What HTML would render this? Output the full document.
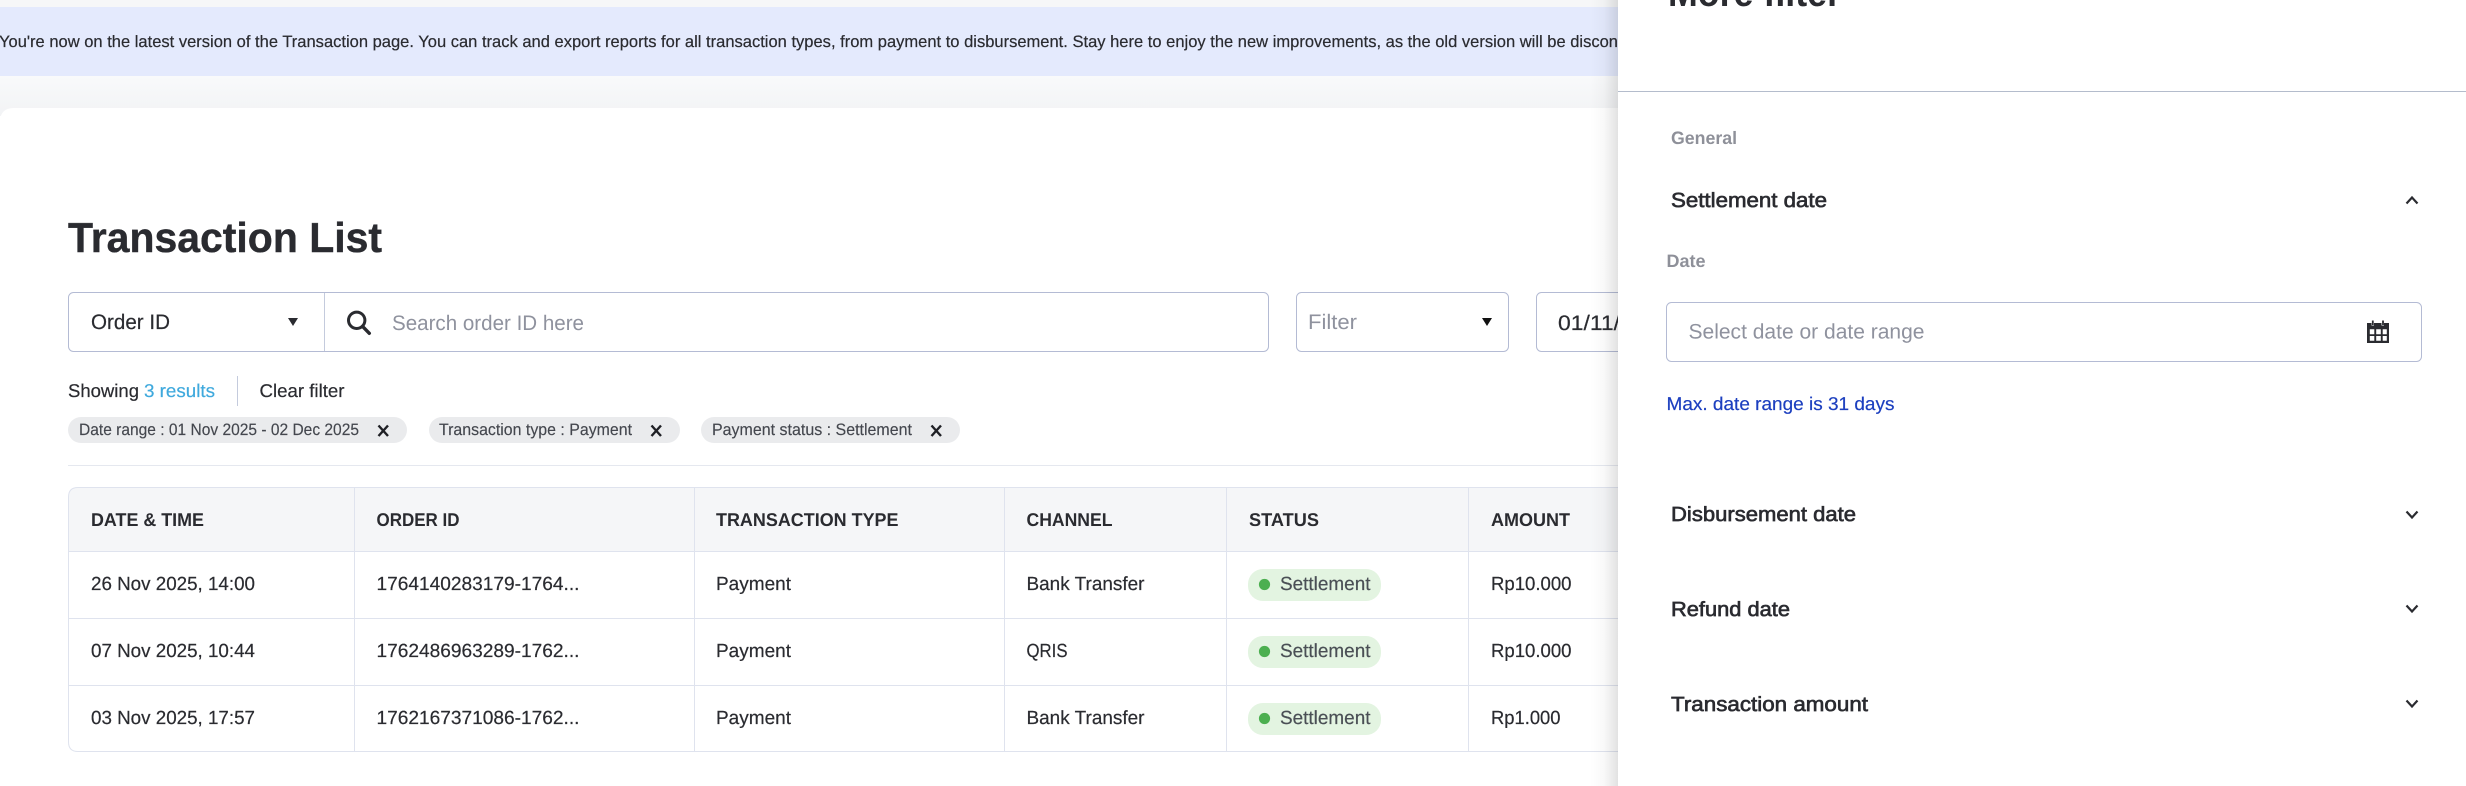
<!DOCTYPE html>
<html lang="en">
<head>
<meta charset="utf-8">
<title>Transaction List</title>
<style>
html,body{margin:0;padding:0;width:2466px;height:786px;overflow:hidden;background:#fff}
svg{display:block}
text{font-family:"Liberation Sans",sans-serif;white-space:pre;text-rendering:geometricPrecision}
.b{font-weight:700}
.m{stroke-width:.65px}
.t{stroke:#2a2b30;stroke-width:.2px}
</style>
</head>
<body>
<svg xmlns="http://www.w3.org/2000/svg" width="2466" height="786" viewBox="0 0 2466 786">
<defs>
<linearGradient id="top" x1="0" y1="0" x2="0" y2="1"><stop offset="0" stop-color="#f9fafb"/><stop offset="1" stop-color="#f2f3f5"/></linearGradient>
<linearGradient id="sh" x1="0" y1="0" x2="1" y2="0"><stop offset="0" stop-color="#000" stop-opacity="0"/><stop offset=".5" stop-color="#000" stop-opacity=".025"/><stop offset="1" stop-color="#000" stop-opacity=".115"/></linearGradient>
</defs>

<!-- page background -->
<rect width="2466" height="786" fill="#fff"/>
<rect width="2466" height="7" fill="#f6f7f8"/>
<rect y="76" width="2466" height="40" fill="url(#top)"/>
<rect y="7" width="2466" height="69" fill="#e4eafd"/>
<text class="t" x="-1" y="47" font-size="16.5" fill="#2a2b30" textLength="1619" lengthAdjust="spacingAndGlyphs">You're now on the latest version of the Transaction page. You can track and export reports for all transaction types, from payment to disbursement. Stay here to enjoy the new improvements, as the old version will be discon</text>

<!-- card -->
<path d="M0 122Q0 108 14 108H2466V786H0Z" fill="#fff"/>

<text class="b" x="68" y="252" font-size="42" fill="#2a2b30" stroke="#2a2b30" stroke-width=".4" textLength="314" lengthAdjust="spacingAndGlyphs">Transaction List</text>

<!-- search -->
<rect x="68.5" y="292.5" width="1200" height="59" rx="5" fill="#fff" stroke="#b4bbd4"/>
<line x1="324.5" y1="293" x2="324.5" y2="351" stroke="#c4cbdd"/>
<text class="t" x="91" y="329" font-size="21" fill="#2a2b30" textLength="79" lengthAdjust="spacingAndGlyphs">Order ID</text>
<path d="M288 318H298L293 326Z" fill="#2a2b30"/>
<circle cx="356.7" cy="320.3" r="8.2" fill="none" stroke="#2a2b30" stroke-width="3"/>
<path d="M362.6 326.4L369.3 333.3" fill="none" stroke="#2a2b30" stroke-width="3.4" stroke-linecap="round"/>
<text x="392" y="330" font-size="21" fill="#8f929e" textLength="192" lengthAdjust="spacingAndGlyphs">Search order ID here</text>

<rect x="1296.5" y="292.5" width="212" height="59" rx="5" fill="#fff" stroke="#b4bbd4"/>
<text x="1308" y="329" font-size="21" fill="#8f929e" textLength="49" lengthAdjust="spacingAndGlyphs">Filter</text>
<path d="M1482 318H1492L1487 326Z" fill="#111"/>

<rect x="1536.5" y="292.5" width="200" height="59" rx="5" fill="#fff" stroke="#b4bbd4"/>
<text class="t" x="1558" y="330" font-size="21" fill="#2a2b30" textLength="62" lengthAdjust="spacingAndGlyphs">01/11/</text>

<!-- results -->
<text class="t" x="68" y="397" font-size="18.5" fill="#2a2b30" textLength="71" lengthAdjust="spacingAndGlyphs">Showing</text>
<text x="144" y="397" font-size="18.5" fill="#3fa9dd" stroke="#3fa9dd" stroke-width=".2" textLength="71" lengthAdjust="spacingAndGlyphs">3 results</text>
<line x1="237.5" y1="376" x2="237.5" y2="406" stroke="#c4cbdd"/>
<text class="t" x="259.5" y="397" font-size="18.5" fill="#2a2b30" textLength="85" lengthAdjust="spacingAndGlyphs">Clear filter</text>

<!-- chips -->
<g fill="#eaebed">
<rect x="68" y="417" width="339" height="26" rx="13"/>
<rect x="429" y="417" width="251" height="26" rx="13"/>
<rect x="701" y="417" width="259" height="26" rx="13"/>
</g>
<g font-size="16.5" fill="#44474e" stroke="#44474e" stroke-width=".15">
<text x="79" y="435" textLength="280" lengthAdjust="spacingAndGlyphs">Date range : 01 Nov 2025 - 02 Dec 2025</text>
<text x="439" y="435" textLength="193" lengthAdjust="spacingAndGlyphs">Transaction type : Payment</text>
<text x="712" y="435" textLength="200" lengthAdjust="spacingAndGlyphs">Payment status : Settlement</text>
</g>
<g fill="none" stroke="#1f2025" stroke-width="2.4">
<path d="M378.5 425.5L388 436M388 425.5L378.5 436"/>
<path d="M651.5 425.5L661 436M661 425.5L651.5 436"/>
<path d="M931.5 425.5L941 436M941 425.5L931.5 436"/>
</g>
<line x1="68" y1="465.5" x2="1618" y2="465.5" stroke="#e5e8ef" stroke-width="1"/>

<!-- table -->
<path d="M68.5 551V497Q68.5 487.5 78 487.5H1618V551H68.5Z" fill="#f5f6f8"/>
<path d="M1618 487.5H78Q68.5 487.5 68.5 497V742Q68.5 751.5 78 751.5H1618" fill="none" stroke="#dfe3ee"/>
<g stroke="#dfe3ee" stroke-width="1">
<line x1="68" y1="551.5" x2="1618" y2="551.5"/>
<line x1="68" y1="618.5" x2="1618" y2="618.5"/>
<line x1="68" y1="685.5" x2="1618" y2="685.5"/>
<line x1="354.5" y1="488" x2="354.5" y2="751"/>
<line x1="694.5" y1="488" x2="694.5" y2="751"/>
<line x1="1004.5" y1="488" x2="1004.5" y2="751"/>
<line x1="1226.5" y1="488" x2="1226.5" y2="751"/>
<line x1="1468.5" y1="488" x2="1468.5" y2="751"/>
</g>
<g font-size="18.5" font-weight="700" fill="#2a2b30">
<text x="91" y="526" textLength="113" lengthAdjust="spacingAndGlyphs">DATE &amp; TIME</text>
<text x="376.5" y="526" textLength="83" lengthAdjust="spacingAndGlyphs">ORDER ID</text>
<text x="716" y="526" textLength="182.5" lengthAdjust="spacingAndGlyphs">TRANSACTION TYPE</text>
<text x="1026.5" y="526" textLength="86" lengthAdjust="spacingAndGlyphs">CHANNEL</text>
<text x="1249" y="526" textLength="70" lengthAdjust="spacingAndGlyphs">STATUS</text>
<text x="1491" y="526" textLength="79" lengthAdjust="spacingAndGlyphs">AMOUNT</text>
</g>
<g font-size="19" fill="#2a2b30" stroke="#2a2b30" stroke-width=".2">
<text x="91" y="590" textLength="164" lengthAdjust="spacingAndGlyphs">26 Nov 2025, 14:00</text>
<text x="376.5" y="590" textLength="203" lengthAdjust="spacingAndGlyphs">1764140283179-1764...</text>
<text x="716" y="590" textLength="75" lengthAdjust="spacingAndGlyphs">Payment</text>
<text x="1026.5" y="590" textLength="118" lengthAdjust="spacingAndGlyphs">Bank Transfer</text>
<text x="1491" y="590" textLength="80.5" lengthAdjust="spacingAndGlyphs">Rp10.000</text>

<text x="91" y="657" textLength="164" lengthAdjust="spacingAndGlyphs">07 Nov 2025, 10:44</text>
<text x="376.5" y="657" textLength="203" lengthAdjust="spacingAndGlyphs">1762486963289-1762...</text>
<text x="716" y="657" textLength="75" lengthAdjust="spacingAndGlyphs">Payment</text>
<text x="1026.5" y="657" textLength="41" lengthAdjust="spacingAndGlyphs">QRIS</text>
<text x="1491" y="657" textLength="80.5" lengthAdjust="spacingAndGlyphs">Rp10.000</text>

<text x="91" y="724" textLength="164" lengthAdjust="spacingAndGlyphs">03 Nov 2025, 17:57</text>
<text x="376.5" y="724" textLength="203" lengthAdjust="spacingAndGlyphs">1762167371086-1762...</text>
<text x="716" y="724" textLength="75" lengthAdjust="spacingAndGlyphs">Payment</text>
<text x="1026.5" y="724" textLength="118" lengthAdjust="spacingAndGlyphs">Bank Transfer</text>
<text x="1491" y="724" textLength="69.5" lengthAdjust="spacingAndGlyphs">Rp1.000</text>
</g>
<g fill="#e3f4e1">
<rect x="1248" y="569" width="133" height="32" rx="15"/>
<rect x="1248" y="636" width="133" height="32" rx="15"/>
<rect x="1248" y="703" width="133" height="32" rx="15"/>
</g>
<g fill="#4caf50">
<circle cx="1264.5" cy="584.5" r="5.6"/>
<circle cx="1264.5" cy="651.5" r="5.6"/>
<circle cx="1264.5" cy="718.5" r="5.6"/>
</g>
<g font-size="19" fill="#4a4f55" stroke="#4a4f55" stroke-width=".2">
<text x="1280" y="590" textLength="90.5" lengthAdjust="spacingAndGlyphs">Settlement</text>
<text x="1280" y="657" textLength="90.5" lengthAdjust="spacingAndGlyphs">Settlement</text>
<text x="1280" y="724" textLength="90.5" lengthAdjust="spacingAndGlyphs">Settlement</text>
</g>

<!-- panel shadow -->
<rect x="1590" y="0" width="28" height="786" fill="url(#sh)"/>

<!-- panel -->
<rect x="1618" y="0" width="848" height="786" fill="#fff"/>
<text class="b" x="1668" y="6" font-size="39" fill="#2a2b30" textLength="173" lengthAdjust="spacingAndGlyphs">More filter</text>
<line x1="1618" y1="91.5" x2="2466" y2="91.5" stroke="#b4bccc"/>

<text x="1671" y="144" font-size="18" font-weight="700" fill="#8e9099" textLength="66" lengthAdjust="spacingAndGlyphs">General</text>
<text class="m" x="1671" y="207" font-size="20.5" fill="#2a2b30" stroke="#2a2b30" textLength="156" lengthAdjust="spacingAndGlyphs">Settlement date</text>
<path d="M2406.5 203.5L2412 197.5L2417.5 203.5" fill="none" stroke="#2a2b30" stroke-width="2.2"/>

<text x="1666.5" y="267" font-size="18" font-weight="700" fill="#8e9099" textLength="39" lengthAdjust="spacingAndGlyphs">Date</text>
<rect x="1666.5" y="302.5" width="755" height="59" rx="5" fill="#fff" stroke="#b4bbd4"/>
<text x="1688.5" y="338.5" font-size="21" fill="#8f929e" textLength="236" lengthAdjust="spacingAndGlyphs">Select date or date range</text>

<!-- calendar icon -->
<path fill-rule="evenodd" fill="#2a2b30" d="M2367 323H2371.5V325.5H2374V323H2381.5V325.5H2384V323H2389V343H2367ZM2369.8 329.3V334.3H2374.3V329.3ZM2376.2 329.3V334.3H2380.8V329.3ZM2382.7 329.3V334.3H2386.8V329.3ZM2369.8 336V340.8H2374.3V336ZM2376.2 336V340.8H2380.8V336ZM2382.7 336V340.8H2386.8V336Z"/>
<path d="M2372.8 320.5V325M2383 320.5V325" fill="none" stroke="#2a2b30" stroke-width="1.8"/>

<text x="1666.5" y="410" font-size="18.5" fill="#1c3fbf" stroke="#1c3fbf" stroke-width=".2" textLength="228" lengthAdjust="spacingAndGlyphs">Max. date range is 31 days</text>

<text class="m" x="1671" y="521" font-size="20.5" fill="#2a2b30" stroke="#2a2b30" textLength="185" lengthAdjust="spacingAndGlyphs">Disbursement date</text>
<text class="m" x="1671" y="616" font-size="20.5" fill="#2a2b30" stroke="#2a2b30" textLength="119" lengthAdjust="spacingAndGlyphs">Refund date</text>
<text class="m" x="1671" y="711" font-size="20.5" fill="#2a2b30" stroke="#2a2b30" textLength="197" lengthAdjust="spacingAndGlyphs">Transaction amount</text>
<g fill="none" stroke="#2a2b30" stroke-width="2.2">
<path d="M2406.5 511.5L2412 517.5L2417.5 511.5"/>
<path d="M2406.5 605.5L2412 611.5L2417.5 605.5"/>
<path d="M2406.5 700.5L2412 706.5L2417.5 700.5"/>
</g>
</svg>
</body>
</html>
